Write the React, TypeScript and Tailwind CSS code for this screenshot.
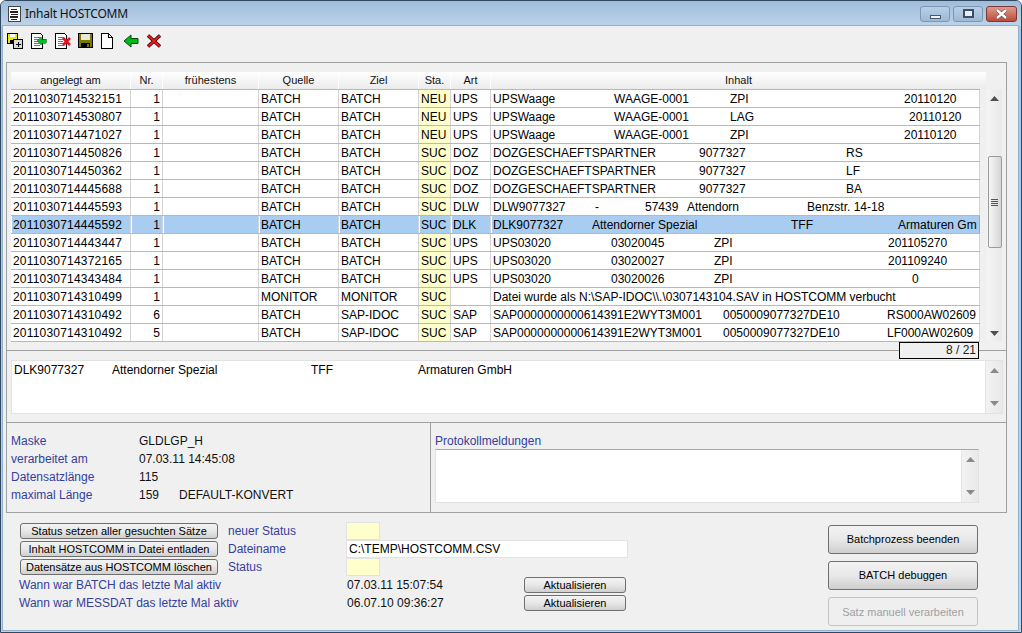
import React from "react";

type Seg = [number, string];
type Row = {
  d: string;
  n: string;
  q: string;
  z: string;
  s: string;
  a: string;
  t: Seg[];
  sel?: boolean;
};

const B = "BATCH";
const rows: Row[] = [
  { d: "2011030714532151", n: "1", q: B, z: B, s: "NEU", a: "UPS", t: [[493, "UPSWaage"], [614, "WAAGE-0001"], [730, "ZPI"], [904, "20110120"]] },
  { d: "2011030714530807", n: "1", q: B, z: B, s: "NEU", a: "UPS", t: [[493, "UPSWaage"], [614, "WAAGE-0001"], [730, "LAG"], [909, "20110120"]] },
  { d: "2011030714471027", n: "1", q: B, z: B, s: "NEU", a: "UPS", t: [[493, "UPSWaage"], [614, "WAAGE-0001"], [730, "ZPI"], [904, "20110120"]] },
  { d: "2011030714450826", n: "1", q: B, z: B, s: "SUC", a: "DOZ", t: [[493, "DOZGESCHAEFTSPARTNER"], [699, "9077327"], [846, "RS"]] },
  { d: "2011030714450362", n: "1", q: B, z: B, s: "SUC", a: "DOZ", t: [[493, "DOZGESCHAEFTSPARTNER"], [699, "9077327"], [846, "LF"]] },
  { d: "2011030714445688", n: "1", q: B, z: B, s: "SUC", a: "DOZ", t: [[493, "DOZGESCHAEFTSPARTNER"], [699, "9077327"], [846, "BA"]] },
  { d: "2011030714445593", n: "1", q: B, z: B, s: "SUC", a: "DLW", t: [[493, "DLW9077327"], [595, "-"], [645, "57439"], [687, "Attendorn"], [807, "Benzstr. 14-18"]] },
  { d: "2011030714445592", n: "1", q: B, z: B, s: "SUC", a: "DLK", sel: true, t: [[493, "DLK9077327"], [592, "Attendorner Spezial"], [791, "TFF"], [898, "Armaturen Gm"]] },
  { d: "2011030714443447", n: "1", q: B, z: B, s: "SUC", a: "UPS", t: [[493, "UPS03020"], [611, "03020045"], [714, "ZPI"], [888, "201105270"]] },
  { d: "2011030714372165", n: "1", q: B, z: B, s: "SUC", a: "UPS", t: [[493, "UPS03020"], [611, "03020027"], [714, "ZPI"], [888, "201109240"]] },
  { d: "2011030714343484", n: "1", q: B, z: B, s: "SUC", a: "UPS", t: [[493, "UPS03020"], [611, "03020026"], [714, "ZPI"], [912, "0"]] },
  { d: "2011030714310499", n: "1", q: "MONITOR", z: "MONITOR", s: "SUC", a: "", t: [[493, "Datei wurde als N:\\SAP-IDOC\\\\.\\0307143104.SAV in HOSTCOMM verbucht"]] },
  { d: "2011030714310492", n: "6", q: B, z: "SAP-IDOC", s: "SUC", a: "SAP", t: [[493, "SAP0000000000614391E2WYT3M001"], [723, "0050009077327DE10"], [887, "RS000AW02609"]] },
  { d: "2011030714310492", n: "5", q: B, z: "SAP-IDOC", s: "SUC", a: "SAP", t: [[493, "SAP0000000000614391E2WYT3M001"], [723, "0050009077327DE10"], [887, "LF000AW02609"]] },
];

const Up = ({ fill = "#505050" }: { fill?: string }) => (
  <svg width="9" height="5" viewBox="0 0 9 5"><path d="M4.5 0 L9 5 H0 Z" fill={fill} /></svg>
);
const Down = ({ fill = "#505050" }: { fill?: string }) => (
  <svg width="9" height="5" viewBox="0 0 9 5"><path d="M0 0 H9 L4.5 5 Z" fill={fill} /></svg>
);

function MiniScroll({ className }: { className: string }) {
  return (
    <div className={`flex flex-col items-center justify-between py-[7px] bg-gradient-to-r from-[#f2f2f2] to-[#e9e9e9] border-l border-[#e4e4e4] ${className}`}>
      <Up fill="#8a8a8a" />
      <Down fill="#8a8a8a" />
    </div>
  );
}

function Btn({ children, className = "" }: { children: React.ReactNode; className?: string }) {
  return (
    <button className={`flex items-center justify-center rounded-[3px] border border-[#6f6f6f] bg-gradient-to-b from-[#f3f3f3] via-[#e8e8e8] to-[#cfcfcf] text-black ${className}`}>
      {children}
    </button>
  );
}

const Icon = ({ children, w = 16 }: { children: React.ReactNode; w?: number }) => (
  <svg width={w} height="16" viewBox={`0 0 ${w} 16`} shapeRendering="crispEdges">{children}</svg>
);

const docLines = (
  <g fill="#777">
    <rect x="3" y="4" width="6" height="1" />
    <rect x="3" y="6" width="5" height="1" />
    <rect x="3" y="8" width="5" height="1" />
    <rect x="3" y="10" width="5" height="1" />
    <rect x="3" y="12" width="6" height="1" />
  </g>
);

export default function App() {
  return (
    <div className="relative flex h-[633px] w-[1022px] flex-col overflow-hidden rounded-t-[6px] border border-[#33475c] bg-gradient-to-b from-[#a9c4df] to-[#bcd4ec] text-[12px] leading-[18px] text-black [font-family:'Liberation_Sans',Arial,sans-serif]">
      {/* title bar */}
      <div className="flex h-[25px] shrink-0 items-center pl-[7px] pr-[4px] bg-gradient-to-b from-[#9fbcda] to-[#bdd4ea]">
        <svg width="13" height="16" viewBox="0 0 13 16" shapeRendering="crispEdges">
          <rect x="0.5" y="0.5" width="12" height="15" fill="#fff" stroke="#444" />
          <g fill="#222">
            <rect x="3" y="3" width="6" height="1" />
            <rect x="2" y="5" width="8" height="2" />
            <rect x="3" y="8" width="7" height="1" />
            <rect x="2" y="10" width="8" height="2" />
            <rect x="3" y="13" width="6" height="1" />
          </g>
        </svg>
        <span className="ml-[4px] text-[12px] tracking-[-0.2px] text-[#101010] [font-family:'Noto_Sans',sans-serif]">Inhalt HOSTCOMM</span>
        <div className="ml-auto flex items-center gap-[3px]">
          <div className="flex h-[16px] w-[30px] items-end justify-center rounded-[3px] border border-[#7e98b3] bg-gradient-to-b from-[#b8cfe6] to-[#9fb9d4] pb-[2px]">
            <div className="h-[4px] w-[11px] border border-[#46586c] bg-white/80" />
          </div>
          <div className="flex h-[16px] w-[30px] items-center justify-center rounded-[3px] border border-[#7e98b3] bg-gradient-to-b from-[#b8cfe6] to-[#9fb9d4]">
            <div className="h-[9px] w-[11px] border-2 border-[#3c4e62] bg-white/70" />
          </div>
          <div className="flex h-[16px] w-[31px] items-center justify-center rounded-[3px] border border-[#7a3a34] bg-gradient-to-b from-[#dd9a8e] to-[#bb4a3c]">
            <svg width="13" height="10" viewBox="0 0 13 10"><path d="M2 1 L11 9 M11 1 L2 9" stroke="#4a3a3a" strokeWidth="3.4" /><path d="M2 1 L11 9 M11 1 L2 9" stroke="#fff" strokeWidth="2.4" /></svg>
          </div>
        </div>
      </div>

      {/* client */}
      <div className="ml-[2px] mr-[3px] mb-[2px] flex min-h-0 flex-1 flex-col bg-[#f0f0f0] shadow-[0_0_0_1px_#8fb2d3]">
        {/* toolbar */}
        <div className="flex h-[36px] shrink-0 items-start gap-[8px] pl-[4px] pt-[7px]">
          <Icon>
            <rect x="0.5" y="0.5" width="10" height="10" fill="#f5e800" stroke="#000" />
            <rect x="3" y="1" width="5" height="3" fill="#fff" />
            <rect x="3" y="7" width="5" height="3" fill="#000" />
            <rect x="6.5" y="6.5" width="9" height="9" fill="#d8d8d8" stroke="#000" />
            <rect x="9" y="10.5" width="5" height="1" fill="#000" />
            <rect x="11" y="8.5" width="1" height="5" fill="#000" />
          </Icon>
          <Icon>
            <path d="M0.5 0.5 H9.5 L11.5 2.5 V15.5 H0.5 Z" fill="#fff" stroke="#000" />
            {docLines}
            <path d="M6 8 L10 4 V6 H15 V10 H10 V12 Z" fill="#00c020" stroke="#006010" strokeWidth="0.6" />
          </Icon>
          <Icon>
            <path d="M0.5 0.5 H9.5 L11.5 2.5 V15.5 H0.5 Z" fill="#fff" stroke="#000" />
            {docLines}
            <path d="M8 5 L15 12 M15 5 L8 12" stroke="#e01020" strokeWidth="2.6" shapeRendering="auto" />
          </Icon>
          <span className="-ml-[1px] flex">
            <Icon w={15}>
              <rect x="0.5" y="0.5" width="14" height="14" fill="#7a7a00" stroke="#000" />
              <rect x="3" y="1" width="9" height="6" fill="#e8e8d8" />
              <rect x="3" y="10" width="9" height="5" fill="#000" />
              <rect x="9" y="11" width="2" height="3" fill="#7a7a00" />
            </Icon>
          </span>
          <Icon w={12}>
            <path d="M0.5 0.5 H7.5 L11.5 4.5 V15.5 H0.5 Z" fill="#fff" stroke="#000" />
            <path d="M7.5 0.5 V4.5 H11.5" fill="none" stroke="#000" />
          </Icon>
          <span className="ml-[2px] flex">
            <Icon>
              <path d="M1 8 L8 2 V5.5 H15 V10.5 H8 V14 Z" fill="#00b818" stroke="#004c10" shapeRendering="auto" />
            </Icon>
          </span>
          <span className="-ml-[1px] flex">
            <Icon>
              <path d="M2 2.5 L14 13.5 M14 2.5 L2 13.5" stroke="#000" strokeWidth="3.4" shapeRendering="auto" />
              <path d="M2 2.5 L14 13.5 M14 2.5 L2 13.5" stroke="#f01818" strokeWidth="2.2" shapeRendering="auto" />
            </Icon>
          </span>
        </div>

        {/* panels */}
        <div className="ml-[3px] flex w-[1001px] shrink-0 flex-col divide-y divide-[#a0a0a0] border border-[#a0a0a0]">
          {/* table panel */}
          <div className="relative flex h-[288px] pl-[4px] pt-[9px]">
            <div className="w-[975px]">
              <div className="flex h-[17px] items-center bg-gradient-to-b from-white to-[#ebebeb] text-center text-[11px] leading-[17px] text-[#111]">
                <div className="w-[120px] border-r border-white">angelegt am</div>
                <div className="w-[32px] border-r border-white">Nr.</div>
                <div className="w-[96px] border-r border-white">frühestens</div>
                <div className="w-[80px] border-r border-white">Quelle</div>
                <div className="w-[80px] border-r border-white">Ziel</div>
                <div className="w-[32px] border-r border-white">Sta.</div>
                <div className="w-[40px] border-r border-white">Art</div>
                <div className="flex-1">Inhalt</div>
              </div>
              <div className="w-[969px] border-t border-[#b8b8b8] bg-white">
                {rows.map((r, i) => {
                  const cell = `h-full border-r border-[#d4d4d4] whitespace-nowrap overflow-hidden ${r.sel ? "bg-[#a8cdf0] border-l border-l-white pl-[1px]" : "pl-[2px]"}`;
                  return (
                    <div key={i} className="flex h-[18px] border-b border-[#b8b8b8] leading-[19px]">
                      <div className={`w-[120px] tracking-[0.2px] ${cell}`}>{r.d}</div>
                      <div className={`w-[32px] text-right pr-[2px] ${cell}`}>{r.n}</div>
                      <div className={`w-[96px] ${cell}`} />
                      <div className={`w-[80px] ${cell}`}>{r.q}</div>
                      <div className={`w-[80px] ${cell}`}>{r.z}</div>
                      <div className={`w-[32px] ${cell} ${r.sel ? "" : "bg-[#ffffcc]"}`}>{r.s}</div>
                      <div className={`w-[40px] ${cell}`}>{r.a}</div>
                      <div className={`flex-1 ${cell} ${r.sel ? "border-r-[#7fb2e0]" : ""}`}>
                        {r.t.map(([x, s], j) => {
                          const next = r.t[j + 1];
                          return (
                            <span
                              key={j}
                              className="inline-block whitespace-pre"
                              style={next ? { width: next[0] - x } : undefined}
                            >
                              {s}
                            </span>
                          );
                        })}
                      </div>
                    </div>
                  );
                })}
              </div>
            </div>
            <div className="ml-[1px] mt-[17px] flex h-[252px] w-[15px] flex-col items-center bg-gradient-to-r from-[#f4f4f4] to-[#e9e9e9]">
              <div className="flex h-[67px] w-full justify-center pt-[7px]"><Up /></div>
              <div className="flex h-[92px] w-[14px] items-center justify-center rounded-[2px] border border-[#9a9a9a] bg-gradient-to-r from-[#f6f6f6] to-[#d6d6d6]">
                <div className="flex w-[7px] flex-col gap-[1px]">
                  <div className="h-px bg-[#555]" />
                  <div className="h-px bg-[#555]" />
                  <div className="h-px bg-[#555]" />
                  <div className="h-px bg-[#555]" />
                </div>
              </div>
              <div className="flex w-full flex-1 items-end justify-center pb-[5px]"><Down /></div>
            </div>
            <div className="absolute left-[892px] top-[279px] z-10 h-[17px] w-[80px] border border-black bg-[#f0f0f0] pr-[2px] text-right leading-[15px] text-[#222]">8 / 21</div>
          </div>

          {/* detail panel */}
          <div className="h-[72px] pl-[4px] pt-[9px]">
            <div className="flex h-[54px] w-[992px] border border-[#e2e2e2] bg-white">
              <div className="flex-1 whitespace-nowrap pl-[2px]">
                <span className="inline-block w-[98px]">DLK9077327</span>
                <span className="inline-block w-[199px]">Attendorner Spezial</span>
                <span className="inline-block w-[107px]">TFF</span>
                <span>Armaturen GmbH</span>
              </div>
              <MiniScroll className="w-[17px]" />
            </div>
          </div>

          {/* info panel */}
          <div className="flex h-[89px]">
            <div className="w-[424px] border-r border-[#a0a0a0] pl-[4px] pt-[9px]">
              <div className="grid grid-cols-[128px_40px_1fr] text-[#111]">
                <div className="text-[#33409c]">Maske</div><div className="col-span-2">GLDLGP_H</div>
                <div className="text-[#33409c]">verarbeitet am</div><div className="col-span-2">07.03.11 14:45:08</div>
                <div className="text-[#33409c]">Datensatzlänge</div><div className="col-span-2">115</div>
                <div className="text-[#33409c]">maximal Länge</div><div>159</div><div>DEFAULT-KONVERT</div>
              </div>
            </div>
            <div className="pl-[4px] pt-[9px]">
              <div className="text-[#33409c]">Protokollmeldungen</div>
              <div className="-mt-[1px] flex h-[54px] w-[544px] border border-[#e2e2e2] border-t-[#a8a8a8] bg-white">
                <div className="flex-1" />
                <MiniScroll className="w-[17px]" />
              </div>
            </div>
          </div>
        </div>

        {/* bottom */}
        <div className="flex flex-1 items-start pl-[17px]">
          <div className="mt-[9px] grid grid-cols-[208px_118px_178px_104px] grid-rows-[18px_18px_18px_18px_18px] text-[#33409c]">
            <Btn className="mt-[1px] h-[16px] w-[198px] text-[11px]">Status setzen aller gesuchten Sätze</Btn>
            <div>neuer Status</div>
            <div className="col-span-2"><div className="h-[18px] w-[34px] border border-[#e2e2e2] bg-[#ffffcc]" /></div>

            <Btn className="mt-[1px] h-[16px] w-[198px] text-[11px]">Inhalt HOSTCOMM in Datei entladen</Btn>
            <div>Dateiname</div>
            <div className="col-span-2 h-[18px] border border-[#e2e2e2] bg-white pl-[2px] leading-[16px] text-black">C:\TEMP\HOSTCOMM.CSV</div>

            <Btn className="mt-[1px] h-[16px] w-[198px] text-[11px]">Datensätze aus HOSTCOMM löschen</Btn>
            <div>Status</div>
            <div className="col-span-2"><div className="h-[18px] w-[34px] border border-[#e2e2e2] bg-[#ffffcc]" /></div>

            <div className="col-span-2 -ml-[1px]">Wann war BATCH das letzte Mal aktiv</div>
            <div className="pl-[1px] text-[#111]">07.03.11 15:07:54</div>
            <div className="flex items-start"><Btn className="mt-[1px] h-[16px] w-[102px] text-[11px]">Aktualisieren</Btn></div>

            <div className="col-span-2 -ml-[1px]">Wann war MESSDAT das letzte Mal aktiv</div>
            <div className="pl-[1px] text-[#111]">06.07.10 09:36:27</div>
            <div className="flex items-start"><Btn className="mt-[1px] h-[16px] w-[102px] text-[11px]">Aktualisieren</Btn></div>
          </div>
          <div className="ml-[200px] mt-[12px] flex flex-col gap-[7px] text-[11px]">
            <Btn className="h-[29px] w-[150px] pb-[2px]">Batchprozess beenden</Btn>
            <Btn className="h-[29px] w-[150px] pb-[2px]">BATCH debuggen</Btn>
            <button className="h-[29px] w-[150px] rounded-[3px] border border-[#c4c4c4] bg-[#efefef] text-[#a0a0a0]">Satz manuell verarbeiten</button>
          </div>
        </div>
      </div>
    </div>
  );
}
